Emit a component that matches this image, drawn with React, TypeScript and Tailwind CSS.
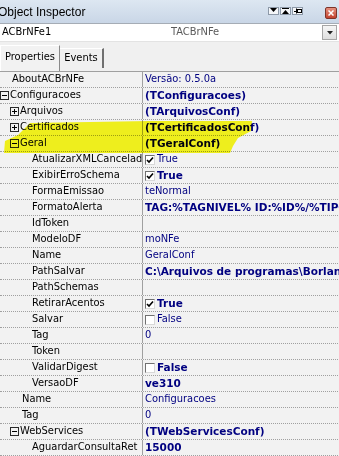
import React from 'react';

type Row = {
  name: string;
  level: number;
  expand?: '+' | '-';
  value?: string;
  bold?: boolean;
  check?: boolean;
};

const rows: Row[] = [
  { name: 'AboutACBrNFe', level: 0, value: 'Versão: 0.5.0a' },
  { name: 'Configuracoes', level: 0, expand: '-', value: '(TConfiguracoes)', bold: true },
  { name: 'Arquivos', level: 1, expand: '+', value: '(TArquivosConf)', bold: true },
  { name: 'Certificados', level: 1, expand: '+', value: '(TCertificadosConf)', bold: true },
  { name: 'Geral', level: 1, expand: '-', value: '(TGeralConf)', bold: true },
  { name: 'AtualizarXMLCancelado', level: 2, value: 'True', check: true },
  { name: 'ExibirErroSchema', level: 2, value: 'True', check: true, bold: true },
  { name: 'FormaEmissao', level: 2, value: 'teNormal' },
  { name: 'FormatoAlerta', level: 2, value: 'TAG:%TAGNIVEL% ID:%ID%/%TIPO%(%DESCRICAO%)', bold: true },
  { name: 'IdToken', level: 2 },
  { name: 'ModeloDF', level: 2, value: 'moNFe' },
  { name: 'Name', level: 2, value: 'GeralConf' },
  { name: 'PathSalvar', level: 2, value: 'C:\\Arquivos de programas\\Borland\\Delphi7', bold: true },
  { name: 'PathSchemas', level: 2 },
  { name: 'RetirarAcentos', level: 2, value: 'True', check: true, bold: true },
  { name: 'Salvar', level: 2, value: 'False', check: false },
  { name: 'Tag', level: 2, value: '0' },
  { name: 'Token', level: 2 },
  { name: 'ValidarDigest', level: 2, value: 'False', check: false, bold: true },
  { name: 'VersaoDF', level: 2, value: 've310', bold: true },
  { name: 'Name', level: 1, value: 'Configuracoes' },
  { name: 'Tag', level: 1, value: '0' },
  { name: 'WebServices', level: 1, expand: '-', value: '(TWebServicesConf)', bold: true },
  { name: 'AguardarConsultaRet', level: 2, value: '15000', bold: true },
];

const indent = ['pl-[12px]', 'pl-[22px]', 'pl-[32px]'];
const boxIndent = ['pl-[0px]', 'pl-[10px]', 'pl-[20px]'];

function ExpandBox({ sign }: { sign: '+' | '-' }) {
  return (
    <span className="relative w-[9px] h-[9px] border border-[#2a2a2a] mr-[1px] shrink-0">
      <span className="absolute left-[1px] right-[1px] top-[3px] h-[1px] bg-black" />
      {sign === '+' && <span className="absolute top-[1px] bottom-[1px] left-[3px] w-[1px] bg-black" />}
    </span>
  );
}

function Check({ on }: { on: boolean }) {
  return (
    <span className="w-[10px] h-[10px] bg-white border-t border-l border-[#707070] border-r border-b border-r-[#d8d8d8] border-b-[#d8d8d8] mr-[2px] shrink-0 flex items-center justify-center">
      {on && (
        <svg width="8" height="8" viewBox="0 0 8 8">
          <path d="M1 4 L3 6 L7 1.5" stroke="#000" strokeWidth="1.6" fill="none" />
        </svg>
      )}
    </span>
  );
}

function PropRow({ row }: { row: Row }) {
  return (
    <div className="h-[16px] flex border-b border-dotted border-[#a0a0a0]">
      <div
        className={`w-[143px] shrink-0 flex items-center border-r border-r-[#a0a0a0] border-solid overflow-hidden whitespace-nowrap text-black ${
          row.expand ? boxIndent[row.level] : indent[row.level]
        }`}
      >
        {row.expand && <ExpandBox sign={row.expand} />}
        <span>{row.name}</span>
      </div>
      <div className="flex-1 flex items-center pl-[2px] overflow-hidden whitespace-nowrap text-[#000080]">
        {row.check !== undefined && <Check on={row.check} />}
        {row.value && (
          <span
            className={
              row.bold
                ? "font-['DejaVu_Sans',sans-serif] [font-stretch:normal] font-bold text-[10.5px]"
                : ''
            }
          >
            {row.value}
          </span>
        )}
      </div>
    </div>
  );
}

function TitleButton({ children }: { children: React.ReactNode }) {
  return (
    <span className="w-[11px] h-[8px] bg-[#f4f6f9] border border-[#8d99a8] flex items-center justify-center">
      {children}
    </span>
  );
}

export default function App() {
  return (
    <div className="relative w-[339px] h-[456px] overflow-hidden bg-[#f0f0f0] font-['DejaVu_Sans_Condensed','Liberation_Sans',sans-serif] [font-stretch:condensed] text-[11px]">
      {/* title bar */}
      <div className="h-[23px] flex items-center bg-gradient-to-b from-[#dde7f2] to-[#c9d6e6]">
        <span className="-ml-[2px] text-[12px] font-['Liberation_Sans',sans-serif] [font-stretch:normal] text-black">
          Object Inspector
        </span>
        <div className="ml-auto flex items-center gap-[1px] mr-[36px] -mt-[2px]">
          <TitleButton>
            <svg width="7" height="5" viewBox="0 0 7 5">
              <path d="M0 0 H7 L3.5 4 Z" fill="#000" />
            </svg>
          </TitleButton>
          <TitleButton>
            <svg width="7" height="6" viewBox="0 0 7 6">
              <rect x="0" y="0" width="7" height="1" fill="#000" />
              <path d="M0 6 H7 L3.5 2 Z" fill="#000" />
            </svg>
          </TitleButton>
          <TitleButton>
            <svg width="8" height="6" viewBox="0 0 8 6">
              <rect x="0" y="3" width="2" height="1" fill="#000" />
              <rect x="2" y="0.5" width="1" height="5" fill="#000" />
              <rect x="3.5" y="1.5" width="4" height="3" fill="none" stroke="#000" strokeWidth="1" />
            </svg>
          </TitleButton>
        </div>
      </div>
      <div className="absolute left-[325px] top-[7px] w-[12px] h-[12px] rounded-[2px] border border-[#7d3429] bg-gradient-to-b from-[#e5907f] to-[#c2402d] flex items-center justify-center">
        <svg width="6" height="6" viewBox="0 0 6 6">
          <path d="M0.5 0.5 L5.5 5.5 M5.5 0.5 L0.5 5.5" stroke="#fff" strokeWidth="1.5" />
        </svg>
      </div>

      {/* component selector */}
      <div className="h-[19px] flex items-center bg-white border-t border-[#a5acb5] border-b border-b-[#e3e3e3]">
        <span className="w-[171px] pl-[2px] text-black">ACBrNFe1</span>
        <span className="flex-1 text-[#5a5a5a]">TACBrNFe</span>
        <span className="w-[15px] h-[15px] mr-[2px] bg-gradient-to-b from-[#f6f6f6] to-[#dedede] border border-[#a6a6a6] flex items-center justify-center">
          <svg width="6" height="4" viewBox="0 0 6 4">
            <path d="M0 0 H6 L3 3.5 Z" fill="#222" />
          </svg>
        </span>
      </div>

      {/* tabs */}
      <div className="h-[29px] flex items-end">
        <div className="w-[60px] h-[26px] flex items-center justify-center border-t border-l border-white border-r border-r-[#8a8a8a] bg-[#f2f2f2] text-black pb-[2px]">
          Properties
        </div>
        <div className="w-[44px] h-[20px] mb-[3px] flex items-center justify-center border-t border-white border-r-2 border-r-[#707070] text-black">
          Events
        </div>
      </div>

      {/* property grid */}
      <div className="flex border-t border-[#a0a0a0] h-[385px] bg-[#f2f2f2]">
        <div className="flex-1 flex flex-col">
          {rows.map((row, i) => (
            <PropRow key={i} row={row} />
          ))}
        </div>
        <div className="w-[16px] flex flex-col bg-[#f0f0f0] overflow-hidden">
          <div className="h-[17px] shrink-0 flex items-center justify-center">
            <svg width="7" height="4" viewBox="0 0 7 4">
              <path d="M0 4 H7 L3.5 0 Z" fill="#2a2a2a" />
            </svg>
          </div>
          <div className="h-[382px] shrink-0 mx-[1px] rounded-[2px] border border-[#9b9b9b] bg-gradient-to-r from-[#f3f3f3] to-[#d9d9d9] flex flex-col items-center justify-center gap-[1px]">
            <span className="w-[6px] h-[1px] bg-[#8a8a8a]" />
            <span className="w-[6px] h-[1px] bg-[#8a8a8a]" />
            <span className="w-[6px] h-[1px] bg-[#8a8a8a]" />
          </div>
        </div>
      </div>

      {/* highlighter mark */}
      <svg
        className="absolute left-0 top-0 pointer-events-none mix-blend-multiply"
        width="339"
        height="456"
        viewBox="0 0 339 456"
      >
        <path
          d="M30 123 L150 121 L252 121 L251 131 L238 138 L233 146 L230 153 L4 153 L5 141 L18 135 Z"
          fill="#fbfb1e"
        />
      </svg>
    </div>
  );
}
